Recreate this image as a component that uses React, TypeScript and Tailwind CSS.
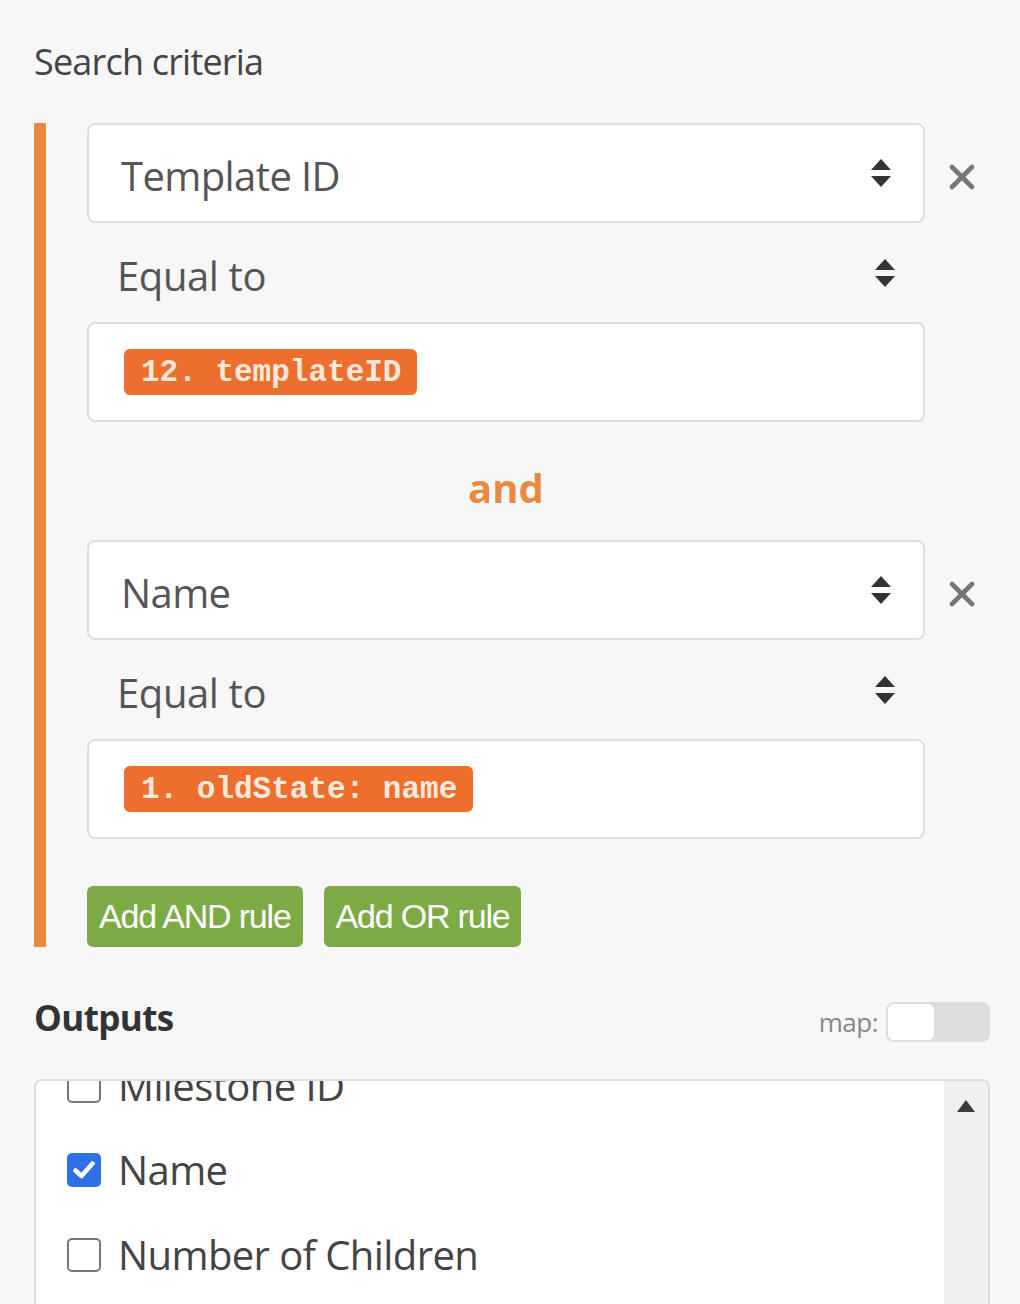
import { X } from "lucide-react";

const sans = "font-['Open_Sans',sans-serif]";

function UpDown() {
  return (
    <svg width="22" height="30" viewBox="0 0 22 30" className="shrink-0">
      <path d="M11 1 L21 12 H1 Z" fill="#333" />
      <path d="M11 29 L21 18 H1 Z" fill="#333" />
    </svg>
  );
}

function Pill({ text }: { text: string }) {
  return (
    <span className="inline-flex h-[46px] items-center rounded-[6px] bg-[#ee6f2d] pl-[17px] pr-[16px] font-['Liberation_Mono',monospace] text-[31px] font-bold leading-none text-[#fde9dc]">
      {text}
    </span>
  );
}

function Rule({ field, value }: { field: string; value: string }) {
  return (
    <div className="flex flex-col">
      <div className="flex items-center">
        <div className="flex h-[100px] w-[838px] items-center justify-between rounded-[8px] border-2 border-[#dedede] bg-white pl-[32px] pr-[31px]">
          <span className="pt-[5px] text-[40px] tracking-[-0.6px] text-[#555]">{field}</span>
          <UpDown />
        </div>
        <X className="ml-[17px] mt-[8px] size-[40px] text-[#777]" strokeWidth={2.8} />
      </div>
      <div className="flex h-[99px] w-[838px] items-center justify-between pl-[30px] pr-[29px]">
        <span className="pt-[6px] text-[40px] tracking-[-0.4px] text-[#555]">Equal to</span>
        <UpDown />
      </div>
      <div className="flex h-[100px] w-[838px] items-center rounded-[8px] border-2 border-[#dedede] bg-white pl-[35px]">
        <Pill text={value} />
      </div>
    </div>
  );
}

function Check({ checked }: { checked?: boolean }) {
  if (checked)
    return (
      <span className="flex size-[34px] shrink-0 items-center justify-center rounded-[5px] bg-[#2f6fe8]">
        <svg width="22" height="18" viewBox="0 0 22 18">
          <path d="M2.5 9.5 L8.5 15 L19.5 2.5" fill="none" stroke="white" strokeWidth="4.5" strokeLinecap="round" strokeLinejoin="round" />
        </svg>
      </span>
    );
  return <span className="size-[34px] shrink-0 rounded-[5px] border-2 border-[#777] bg-white" />;
}

export default function App() {
  return (
    <div className={`${sans} h-[1304px] w-[1020px] overflow-hidden bg-[#f7f7f7] pl-[34px] pt-[40px]`}>
      <h2 className="text-[36px] leading-[44px] tracking-[-0.8px] text-[#444]">Search criteria</h2>

      <div className="mt-[39px] flex border-l-[12px] border-[#ea8a41] pl-[41px]">
        <div className="flex flex-col">
          <Rule field="Template ID" value="12. templateID" />
          <div className="flex h-[118px] w-[838px] items-center justify-center pt-[14px] text-[40px] font-bold text-[#ea8a41]">
            and
          </div>
          <Rule field="Name" value="1. oldState: name" />
          <div className="mt-[47px] flex gap-[21px]">
            <button className="h-[61px] rounded-[6px] bg-[#7cab46] px-[12px] font-['Liberation_Sans',sans-serif] text-[34px] tracking-[-1.2px] text-white">
              Add AND rule
            </button>
            <button className="h-[61px] rounded-[6px] bg-[#7cab46] px-[12px] font-['Liberation_Sans',sans-serif] text-[34px] tracking-[-1.2px] text-white">
              Add OR rule
            </button>
          </div>
        </div>
      </div>

      <div className="mt-[49px] flex h-[44px] items-center justify-between pr-[30px]">
        <span className="text-[35px] font-bold tracking-[-0.6px] text-[#333]">Outputs</span>
        <div className="mt-[8px] flex items-center gap-[8px]">
          <span className="text-[26px] tracking-[-0.5px] text-[#888]">map:</span>
          <span className="flex h-[40px] w-[104px] items-center rounded-[8px] border-2 border-[#ddd] bg-[#ddd]">
            <span className="h-full w-[46px] rounded-[6px] bg-white" />
          </span>
        </div>
      </div>

      <div className="mt-[39px] mr-[30px] flex h-[240px] overflow-hidden rounded-t-[8px] border-2 border-b-0 border-[#ddd] bg-white">
        <div className="flex flex-1 flex-col pl-[31px]">
          <div className="-mt-[25px] flex h-[60px] items-center gap-[17px]">
            <Check />
            <span className="text-[40px] tracking-[-0.6px] text-[#444]">Milestone ID</span>
          </div>
          <div className="mt-[24px] flex h-[60px] items-center gap-[17px]">
            <Check checked />
            <span className="text-[40px] tracking-[-0.6px] text-[#444]">Name</span>
          </div>
          <div className="mt-[25px] flex h-[60px] items-center gap-[17px]">
            <Check />
            <span className="text-[40px] tracking-[-0.6px] text-[#444]">Number of Children</span>
          </div>
        </div>
        <div className="flex w-[44px] justify-center bg-[#f0f0f0] pt-[18px]">
          <svg width="20" height="14" viewBox="0 0 20 14">
            <path d="M10 1 L19 13 H1 Z" fill="#3a3a3a" />
          </svg>
        </div>
      </div>
    </div>
  );
}
